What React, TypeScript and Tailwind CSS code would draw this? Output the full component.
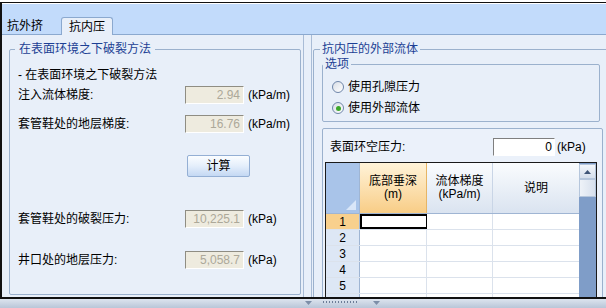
import React from 'react';

function ReadOnlyBox({ value }: { value: string }) {
  return (
    <div className="h-[18px] w-[59px] border border-t-[#8f8d83] border-l-[#8f8d83] border-r-white border-b-white bg-[#eeebdf] pr-[3px] text-right text-[12px] leading-[16px] text-[#aca899]">
      {value}
    </div>
  );
}

function FieldRow({ label, value, unit, className }: { label: string; value: string; unit: string; className: string }) {
  return (
    <div className={`flex h-[18px] items-center ${className}`}>
      <span className="w-[167px] leading-[14px]">{label}</span>
      <ReadOnlyBox value={value} />
      <span className="ml-[4px] leading-[14px]">{unit}</span>
    </div>
  );
}

function Radio({ label, checked, className }: { label: string; checked?: boolean; className: string }) {
  return (
    <div className={`flex h-[18px] items-center pl-[9px] ${className}`}>
      <span className="flex h-[12px] w-[12px] items-center justify-center rounded-full border border-[#6f86a9] bg-linear-to-br from-[#d9dee6] to-white">
        {checked && <span className="h-[5px] w-[5px] rounded-full bg-[#3da82a]" />}
      </span>
      <span className="ml-[4px] leading-[14px]">{label}</span>
    </div>
  );
}

// last row is only partly visible, so it has no number
const ROWS = ['1', '2', '3', '4', '5', ''];

export default function App() {
  return (
    <div className="flex h-[308px] w-[606px] flex-col overflow-hidden bg-white font-['Liberation_Sans','Noto_Sans_CJK_SC',sans-serif] text-[12px] text-black">
      <div className="h-[2px] shrink-0 bg-white" />
      <div className="flex h-[297px] shrink-0 flex-col border-t border-b-2 border-l-2 border-[#111]">
        <div className="h-px shrink-0 bg-white" />
        {/* tab strip */}
        <div className="flex h-[31px] shrink-0 items-end border-b border-[#8ba9cf] bg-[#c2dbfb] pl-px">
          <div className="flex h-[16px] w-[58px] items-center pl-[4px] leading-[14px]">抗外挤</div>
          <div className="-mb-px flex h-[18px] w-[52px] items-center justify-center rounded-t-[3px] border border-b-0 border-[#8ba9cf] bg-[#e8eff9] pt-px leading-[14px]">
            抗内压
          </div>
        </div>

        {/* body */}
        <div className="flex min-h-0 flex-1 overflow-hidden bg-[#e8eff9]">
          {/* left pane */}
          <div className="w-[301px] shrink-0 pl-[7px]">
            <fieldset className="mt-[7px] h-[253px] w-[292px] rounded-[2px] border border-[#9bb1cd] p-0 pl-[8px]">
              <legend className="ml-[-3px] px-[4px] leading-[14px] text-[#1c3f94]">在表面环境之下破裂方法</legend>
              <div className="mt-[12px] h-[14px] leading-[14px]">- 在表面环境之下破裂方法</div>
              <FieldRow className="mt-[4px]" label="注入流体梯度:" value="2.94" unit="(kPa/m)" />
              <FieldRow className="mt-[11px]" label="套管鞋处的地层梯度:" value="16.76" unit="(kPa/m)" />
              <button className="mt-[22px] ml-[169px] flex h-[22px] w-[63px] items-center justify-center rounded-[2px] border border-[#94afd4] bg-linear-to-b from-[#fbfdff] via-[#e4eefb] to-[#c4d8f3] leading-[14px]">
                计算
              </button>
              <FieldRow className="mt-[33px]" label="套管鞋处的破裂压力:" value="10,225.1" unit="(kPa)" />
              <FieldRow className="mt-[23px]" label="井口处的地层压力:" value="5,058.7" unit="(kPa)" />
            </fieldset>
          </div>

          {/* splitter */}
          <div className="w-[9px] shrink-0 border-x border-[#a9bcd6]" />

          {/* right pane */}
          <div className="w-[300px] shrink-0 pl-px">
            <fieldset className="mt-[7px] h-[320px] w-[300px] rounded-[2px] border border-[#9bb1cd] p-0">
              <legend className="ml-[6px] px-[2px] leading-[14px] text-[#1c3f94]">抗内压的外部流体</legend>
              <fieldset className="mt-px ml-[8px] w-[278px] rounded-[2px] border border-[#9bb1cd] p-0 pb-[4px]">
                <legend className="px-[2px] leading-[14px] text-[#1c3f94]">选项</legend>
                <Radio className="mt-[7px]" label="使用孔隙压力" />
                <Radio className="mt-[3px]" label="使用外部流体" checked />
              </fieldset>

              <div className="mt-[6px] ml-[8px] h-[220px] w-[281px] rounded-[2px] border border-[#9bb1cd] bg-[#ebf1fa] pt-[9px]">
                <div className="flex h-[18px] items-center pl-[7px]">
                  <span className="w-[163px] leading-[14px]">表面环空压力:</span>
                  <div className="h-[18px] w-[62px] border border-t-[#7f7f7f] border-l-[#7f7f7f] border-r-white border-b-white bg-white pr-[2px] text-right leading-[16px]">
                    0
                  </div>
                  <span className="ml-[2px] leading-[14px]">(kPa)</span>
                </div>

                {/* grid */}
                <div className="mt-[6px] ml-[2px] flex w-[272px] border border-[#1a1a1a] bg-white">
                  <div className="w-[253px]">
                    <div className="flex h-[51px] border-b border-[#9fb5d3]">
                      <div className="flex w-[34px] items-end justify-end border-r border-[#9fb5d3] bg-[#a9c4e9] p-[3px]">
                        <svg width="10" height="10" viewBox="0 0 10 10">
                          <path d="M10 0 L10 10 L0 10 Z" fill="#d9e6f8" />
                        </svg>
                      </div>
                      <div className="flex w-[67px] flex-col items-center justify-center border-r border-[#e6b565] bg-linear-to-b from-[#fff3d8] to-[#f8cd86] leading-[13px]">
                        <span>底部垂深</span>
                        <span>(m)</span>
                      </div>
                      <div className="flex w-[66px] flex-col items-center justify-center border-r border-[#c9d5e6] bg-linear-to-b from-[#fafcfe] to-[#dae3f0] leading-[13px]">
                        <span>流体梯度</span>
                        <span>(kPa/m)</span>
                      </div>
                      <div className="flex w-[86px] items-center justify-center bg-linear-to-b from-[#fafcfe] to-[#dae3f0] leading-[14px]">
                        说明
                      </div>
                    </div>
                    {ROWS.map((r, i) => (
                      <div key={i} className="flex h-[16px] border-b border-[#dbe2ec]">
                        <div
                          className={`flex w-[34px] items-center justify-center border-r border-[#9fb5d3] leading-[14px] ${
                            i === 0 ? 'bg-[#f8d08d]' : 'bg-[#dde7f5]'
                          }`}
                        >
                          {r}
                        </div>
                        <div className={`w-[67px] border-r ${i === 0 ? 'border-2 border-black' : 'border-[#dbe2ec]'}`} />
                        <div className="w-[66px] border-r border-[#dbe2ec]" />
                        <div className="w-[86px]" />
                      </div>
                    ))}
                  </div>
                  {/* scrollbar */}
                  <div className="flex w-[17px] flex-col bg-[#7f9dc8] pt-px">
                    <div className="flex h-[15px] items-center justify-center border border-[#b5c6dc] bg-linear-to-b from-[#f3f6fa] to-[#d5dfec]">
                      <svg width="7" height="4" viewBox="0 0 7 4">
                        <path d="M3.5 0 L7 4 L0 4 Z" fill="#3f5577" />
                      </svg>
                    </div>
                    <div className="h-[18px] border border-[#b5c6dc] bg-linear-to-r from-[#eef2f8] to-[#d7e0ed]" />
                  </div>
                </div>
              </div>
            </fieldset>
          </div>
        </div>
      </div>

      {/* bottom bar */}
      <div className="flex h-[9px] shrink-0 items-start bg-linear-to-b from-[#dde4ee] to-[#b9c6d8] pl-[305px] pt-[2px]">
        <svg width="7" height="4" viewBox="0 0 7 4">
          <path d="M0 0 L7 0 L3.5 4 Z" fill="#7d8ea8" />
        </svg>
        <div className="ml-[11px] flex gap-[2px]">
          {Array.from({ length: 12 }).map((_, i) => (
            <span key={i} className="h-[2px] w-[1px] bg-[#6c7d97]" />
          ))}
        </div>
        <svg className="ml-[16px]" width="7" height="4" viewBox="0 0 7 4">
          <path d="M0 0 L7 0 L3.5 4 Z" fill="#7d8ea8" />
        </svg>
      </div>
    </div>
  );
}
